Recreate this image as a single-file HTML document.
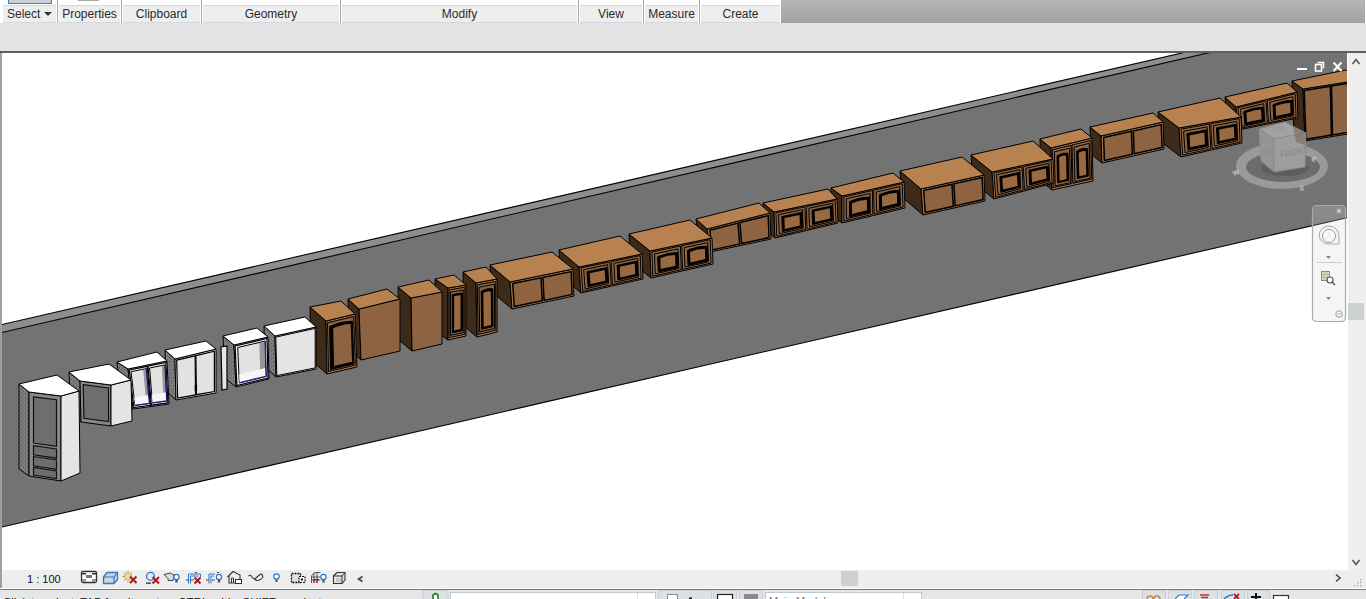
<!DOCTYPE html>
<html><head><meta charset="utf-8"><style>
*{margin:0;padding:0;box-sizing:border-box}
html,body{width:1366px;height:599px;overflow:hidden;background:#fff;font-family:"Liberation Sans",sans-serif}
.a{position:absolute}
.lbl{position:absolute;top:5px;height:18px;background:#eeeeee;border-top:1px solid #d3d9df;border-bottom:1px solid #d3d9df;font-size:12px;color:#2a2a2a;text-align:center;line-height:16px}
.sep{position:absolute;top:0;width:1px;height:23px;background:#a9a9a9}
</style></head><body>
<!-- ribbon -->
<div class="a" style="left:0;top:0;width:781px;height:23px;background:#fff"></div>
<div class="a" style="left:781px;top:0;width:584px;height:23px;background:linear-gradient(#b6b6b6,#a2a2a2)"></div>
<div class="a" style="left:8px;top:0;width:44px;height:4px;background:#c8d0d8;border:1px solid #3c7fd0;border-top:none"></div><div class="a" style="left:78px;top:0;width:21px;height:1px;background:#aaa"></div>
<div class="lbl" style="left:3px;width:53px;text-align:left;padding-left:4px">Select <span style="position:absolute;left:41px;top:6px;width:0;height:0;border-left:4px solid transparent;border-right:4px solid transparent;border-top:4px solid #333"></span></div>
<div class="sep" style="left:57px"></div>
<div class="lbl" style="left:59px;width:61px">Properties</div>
<div class="sep" style="left:121px"></div>
<div class="lbl" style="left:123px;width:77px">Clipboard</div>
<div class="sep" style="left:201px"></div>
<div class="lbl" style="left:203px;width:136px">Geometry</div>
<div class="sep" style="left:340px"></div>
<div class="lbl" style="left:342px;width:235px">Modify</div>
<div class="sep" style="left:578px"></div>
<div class="lbl" style="left:580px;width:62px">View</div>
<div class="sep" style="left:643px"></div>
<div class="lbl" style="left:645px;width:53px">Measure</div>
<div class="sep" style="left:699px"></div>
<div class="lbl" style="left:701px;width:79px">Create</div>
<div class="a" style="left:0;top:23px;width:1366px;height:28px;background:#e4e4e4"></div>
<div class="a" style="left:0;top:51px;width:1366px;height:2px;background:#5f5f5f"></div>
<!-- viewport -->
<svg class="a" style="left:0;top:0" width="1366" height="599" viewBox="0 0 1366 599">
<defs><pattern id="dots" width="4" height="4" patternUnits="userSpaceOnUse"><rect width="4" height="4" fill="#7c7c7c"/><rect x="1" y="1" width="1" height="1" fill="#4a4a4a"/><rect x="3" y="3" width="1" height="1" fill="#5a5a5a"/></pattern><clipPath id="vp"><rect x="2" y="53" width="1345" height="517"/></clipPath></defs>
<g clip-path="url(#vp)">
<polygon points="-50.0,336.5 1400.0,2.8 1400.0,8.4 -50.0,344.6" fill="#8e8e8e"/>
<polygon points="-50.0,344.6 1400.0,8.4 1400.0,205.5 -50.0,539.0" fill="#737373"/>
<line x1="-50" y1="336.5" x2="1400" y2="2.8" stroke="#000" stroke-width="1.1"/>
<line x1="-50" y1="344.6" x2="1400" y2="8.4" stroke="#000" stroke-width="1.1"/>
<line x1="-50" y1="539.0" x2="1400" y2="205.5" stroke="#000" stroke-width="1.1"/>
<polygon points="1292.0,81.0 1303.0,89.0 1305.0,141.0 1294.0,133.0" fill="#3d2a19" stroke="#000" stroke-width="1"/>
<polygon points="1303.0,89.0 1360.0,80.0 1360.0,132.0 1305.0,141.0" fill="#a8754a" stroke="#000" stroke-width="1"/>
<polygon points="1304.2,90.4 1330.4,86.2 1331.4,135.1 1306.0,139.3" fill="#8e6341" stroke="#000" stroke-width="1.5"/>
<polygon points="1331.5,86.1 1358.9,81.7 1358.9,130.6 1332.5,134.9" fill="#8e6341" stroke="#000" stroke-width="1.5"/>
<polygon points="1292.0,81.0 1346.0,70.0 1360.0,80.0 1303.0,89.0" fill="#b7824f" stroke="#000" stroke-width="1"/>
<polygon points="1225.0,97.0 1236.0,107.0 1238.0,130.0 1227.0,120.0" fill="#3d2a19" stroke="#000" stroke-width="1"/>
<polygon points="1236.0,107.0 1297.0,92.0 1298.0,118.0 1238.0,130.0" fill="#a8754a" stroke="#000" stroke-width="1"/>
<polygon points="1237.9,107.7 1266.0,100.9 1267.3,122.9 1239.7,128.5" fill="#8e6341" stroke="#000" stroke-width="1"/>
<polygon points="1240.5,109.2 1263.7,103.7 1264.8,121.7 1242.0,126.4" fill="none" stroke="#000" stroke-width="1"/>
<path d="M1244.9,124.8 L1243.8,111.5 Q1253.4,107.4 1263.3,107.0 L1264.2,120.8 Z" fill="#000" stroke="#000" stroke-width="1"/>
<path d="M1247.1,122.2 L1246.4,112.8 Q1253.6,109.8 1261.0,109.5 L1261.6,119.2 Z" fill="#99693f" stroke="none" stroke-width="1"/>
<polygon points="1267.2,100.6 1295.2,93.7 1296.1,117.1 1268.5,122.7" fill="#8e6341" stroke="#000" stroke-width="1"/>
<polygon points="1269.8,102.2 1292.9,96.7 1293.7,115.7 1270.8,120.4" fill="none" stroke="#000" stroke-width="1"/>
<path d="M1273.8,118.8 L1273.0,104.7 Q1282.6,100.4 1292.4,100.2 L1293.0,114.8 Z" fill="#000" stroke="#000" stroke-width="1"/>
<path d="M1276.1,116.1 L1275.5,106.1 Q1282.7,103.1 1290.1,102.8 L1290.5,113.0 Z" fill="#99693f" stroke="none" stroke-width="1"/>
<polygon points="1225.0,97.0 1287.0,83.0 1297.0,92.0 1236.0,107.0" fill="#b7824f" stroke="#000" stroke-width="1"/>
<polygon points="1158.0,112.0 1179.0,128.0 1181.0,157.0 1160.0,141.0" fill="#3d2a19" stroke="#000" stroke-width="1"/>
<polygon points="1179.0,128.0 1241.0,117.0 1242.0,143.0 1181.0,157.0" fill="#a8754a" stroke="#000" stroke-width="1"/>
<polygon points="1181.0,129.1 1209.5,124.0 1210.8,148.8 1182.7,155.1" fill="#8e6341" stroke="#000" stroke-width="1"/>
<polygon points="1183.6,131.3 1207.1,126.9 1208.3,147.4 1185.0,152.6" fill="none" stroke="#000" stroke-width="1"/>
<polygon points="1186.9,133.6 1206.7,129.8 1207.6,145.9 1188.0,150.2" fill="#000" stroke="#000" stroke-width="1"/>
<polygon points="1189.5,135.4 1204.3,132.5 1205.0,144.2 1190.3,147.3" fill="#99693f" stroke="none" stroke-width="1"/>
<polygon points="1210.7,123.8 1239.2,118.6 1240.1,142.1 1212.0,148.5" fill="#8e6341" stroke="#000" stroke-width="1"/>
<polygon points="1213.3,125.8 1236.8,121.4 1237.6,140.8 1214.4,146.0" fill="none" stroke="#000" stroke-width="1"/>
<polygon points="1216.5,127.9 1236.3,124.2 1236.9,139.4 1217.3,143.7" fill="#000" stroke="#000" stroke-width="1"/>
<polygon points="1219.1,129.6 1233.9,126.8 1234.4,137.8 1219.7,141.0" fill="#99693f" stroke="none" stroke-width="1"/>
<polygon points="1158.0,112.0 1220.0,98.0 1241.0,117.0 1179.0,128.0" fill="#b7824f" stroke="#000" stroke-width="1"/>
<polygon points="1090.0,127.0 1101.0,136.0 1102.0,163.0 1091.0,154.0" fill="#3d2a19" stroke="#000" stroke-width="1"/>
<polygon points="1101.0,136.0 1163.0,122.0 1164.0,149.0 1102.0,163.0" fill="#a8754a" stroke="#000" stroke-width="1"/>
<polygon points="1103.6,137.6 1131.5,131.3 1132.3,154.2 1104.4,160.6" fill="#8e6341" stroke="#000" stroke-width="1.5"/>
<polygon points="1133.3,130.9 1161.2,124.6 1162.1,147.5 1134.2,153.8" fill="#8e6341" stroke="#000" stroke-width="1.5"/>
<polygon points="1090.0,127.0 1153.0,113.0 1163.0,122.0 1101.0,136.0" fill="#b7824f" stroke="#000" stroke-width="1"/>
<polygon points="1040.0,139.0 1051.0,148.0 1052.0,190.0 1041.0,181.0" fill="#3d2a19" stroke="#000" stroke-width="1"/>
<polygon points="1051.0,148.0 1092.0,138.0 1093.0,181.0 1052.0,190.0" fill="#a8754a" stroke="#000" stroke-width="1"/>
<polygon points="1052.3,149.8 1071.1,145.2 1072.0,183.5 1053.2,187.6" fill="#8e6341" stroke="#000" stroke-width="1"/>
<polygon points="1054.4,151.8 1069.6,148.2 1070.4,182.6 1055.2,185.9" fill="none" stroke="#000" stroke-width="1"/>
<path d="M1057.6,182.8 L1057.0,155.9 Q1062.4,152.1 1068.0,153.2 L1068.7,180.4 Z" fill="#000" stroke="#000" stroke-width="1"/>
<path d="M1059.6,180.7 L1059.1,157.5 Q1062.5,154.8 1066.0,155.8 L1066.6,179.1 Z" fill="#99693f" stroke="none" stroke-width="1"/>
<polygon points="1072.0,145.0 1090.8,140.4 1091.7,179.1 1072.9,183.3" fill="#8e6341" stroke="#000" stroke-width="1"/>
<polygon points="1074.1,147.1 1089.2,143.4 1090.1,178.2 1074.9,181.6" fill="none" stroke="#000" stroke-width="1"/>
<path d="M1077.3,178.5 L1076.6,151.2 Q1082.1,147.4 1087.7,148.5 L1088.3,176.0 Z" fill="#000" stroke="#000" stroke-width="1"/>
<path d="M1079.3,176.3 L1078.7,152.8 Q1082.2,150.1 1085.7,151.2 L1086.3,174.7 Z" fill="#99693f" stroke="none" stroke-width="1"/>
<polygon points="1040.0,139.0 1081.0,129.0 1092.0,138.0 1051.0,148.0" fill="#b7824f" stroke="#000" stroke-width="1"/>
<polygon points="971.0,155.0 992.0,172.0 994.0,199.0 973.0,182.0" fill="#3d2a19" stroke="#000" stroke-width="1"/>
<polygon points="992.0,172.0 1053.0,159.0 1054.0,183.0 994.0,199.0" fill="#a8754a" stroke="#000" stroke-width="1"/>
<polygon points="993.9,173.0 1022.0,166.9 1023.3,189.9 995.7,197.2" fill="#8e6341" stroke="#000" stroke-width="1"/>
<polygon points="996.5,174.8 1019.7,169.7 1020.8,188.7 998.0,194.7" fill="none" stroke="#000" stroke-width="1"/>
<polygon points="999.8,176.8 1019.2,172.4 1020.1,187.3 1000.9,192.3" fill="#000" stroke="#000" stroke-width="1"/>
<polygon points="1002.3,178.4 1016.9,175.1 1017.6,185.9 1003.1,189.5" fill="#99693f" stroke="none" stroke-width="1"/>
<polygon points="1023.2,166.6 1051.2,160.6 1052.1,182.3 1024.5,189.6" fill="#8e6341" stroke="#000" stroke-width="1"/>
<polygon points="1025.8,168.4 1048.9,163.3 1049.7,181.2 1026.8,187.2" fill="none" stroke="#000" stroke-width="1"/>
<polygon points="1028.9,170.2 1048.4,165.9 1049.0,179.9 1029.7,184.9" fill="#000" stroke="#000" stroke-width="1"/>
<polygon points="1031.5,171.7 1046.0,168.4 1046.5,178.6 1032.0,182.2" fill="#99693f" stroke="none" stroke-width="1"/>
<polygon points="971.0,155.0 1033.0,141.0 1053.0,159.0 992.0,172.0" fill="#b7824f" stroke="#000" stroke-width="1"/>
<polygon points="900.0,171.0 921.0,189.0 923.0,215.0 902.0,197.0" fill="#3d2a19" stroke="#000" stroke-width="1"/>
<polygon points="921.0,189.0 984.0,175.0 985.0,201.0 923.0,215.0" fill="#a8754a" stroke="#000" stroke-width="1"/>
<polygon points="923.7,190.5 952.0,184.2 953.3,206.3 925.3,212.6" fill="#8e6341" stroke="#000" stroke-width="1.5"/>
<polygon points="953.9,183.8 982.2,177.5 983.1,199.6 955.1,205.9" fill="#8e6341" stroke="#000" stroke-width="1.5"/>
<polygon points="900.0,171.0 962.0,157.0 984.0,175.0 921.0,189.0" fill="#b7824f" stroke="#000" stroke-width="1"/>
<polygon points="831.0,188.0 842.0,196.0 842.0,223.0 831.0,215.0" fill="#3d2a19" stroke="#000" stroke-width="1"/>
<polygon points="842.0,196.0 904.0,182.0 905.0,208.0 842.0,223.0" fill="#a8754a" stroke="#000" stroke-width="1"/>
<polygon points="843.9,196.9 872.4,190.5 872.8,214.3 843.9,221.2" fill="#8e6341" stroke="#000" stroke-width="1"/>
<polygon points="846.3,198.8 870.0,193.4 870.3,213.1 846.4,218.7" fill="none" stroke="#000" stroke-width="1"/>
<path d="M849.5,216.9 L849.5,201.6 Q859.4,197.1 869.4,197.0 L869.6,212.2 Z" fill="#000" stroke="#000" stroke-width="1"/>
<path d="M852.0,213.9 L852.0,203.2 Q859.4,199.9 866.9,199.7 L867.1,210.3 Z" fill="#99693f" stroke="none" stroke-width="1"/>
<polygon points="873.6,190.2 902.2,183.7 903.1,207.1 874.1,214.0" fill="#8e6341" stroke="#000" stroke-width="1"/>
<polygon points="876.2,192.0 899.8,186.6 900.5,205.9 876.6,211.6" fill="none" stroke="#000" stroke-width="1"/>
<path d="M879.7,209.8 L879.4,194.7 Q889.3,190.3 899.3,190.2 L899.8,205.0 Z" fill="#000" stroke="#000" stroke-width="1"/>
<path d="M882.2,206.8 L881.9,196.3 Q889.4,193.1 896.9,192.8 L897.2,203.3 Z" fill="#99693f" stroke="none" stroke-width="1"/>
<polygon points="831.0,188.0 893.0,173.0 904.0,182.0 842.0,196.0" fill="#b7824f" stroke="#000" stroke-width="1"/>
<polygon points="763.0,203.0 774.0,212.0 775.0,238.0 764.0,229.0" fill="#3d2a19" stroke="#000" stroke-width="1"/>
<polygon points="774.0,212.0 837.0,199.0 838.0,223.0 775.0,238.0" fill="#a8754a" stroke="#000" stroke-width="1"/>
<polygon points="775.9,212.9 804.9,206.9 805.8,229.4 776.8,236.3" fill="#8e6341" stroke="#000" stroke-width="1"/>
<polygon points="778.5,214.7 802.5,209.7 803.2,228.2 779.3,233.8" fill="none" stroke="#000" stroke-width="1"/>
<polygon points="781.8,216.6 802.0,212.3 802.5,226.9 782.4,231.6" fill="#000" stroke="#000" stroke-width="1"/>
<polygon points="784.4,218.1 799.5,214.9 799.9,225.4 784.8,228.9" fill="#99693f" stroke="none" stroke-width="1"/>
<polygon points="806.2,206.6 835.2,200.6 836.1,222.2 807.1,229.1" fill="#8e6341" stroke="#000" stroke-width="1"/>
<polygon points="808.8,208.3 832.7,203.3 833.5,221.2 809.5,226.8" fill="none" stroke="#000" stroke-width="1"/>
<polygon points="812.0,210.2 832.2,205.8 832.8,219.9 812.6,224.5" fill="#000" stroke="#000" stroke-width="1"/>
<polygon points="814.6,211.6 829.8,208.3 830.2,218.5 815.1,222.0" fill="#99693f" stroke="none" stroke-width="1"/>
<polygon points="763.0,203.0 828.0,189.0 837.0,199.0 774.0,212.0" fill="#b7824f" stroke="#000" stroke-width="1"/>
<polygon points="696.0,219.0 707.0,229.0 710.0,252.0 699.0,242.0" fill="#3d2a19" stroke="#000" stroke-width="1"/>
<polygon points="707.0,229.0 770.0,213.0 771.0,239.0 710.0,252.0" fill="#a8754a" stroke="#000" stroke-width="1"/>
<polygon points="709.8,230.2 738.0,223.1 739.7,243.9 712.2,249.9" fill="#8e6341" stroke="#000" stroke-width="1.5"/>
<polygon points="739.9,222.6 768.2,215.6 769.1,237.6 741.6,243.5" fill="#8e6341" stroke="#000" stroke-width="1.5"/>
<polygon points="696.0,219.0 759.0,203.0 770.0,213.0 707.0,229.0" fill="#b7824f" stroke="#000" stroke-width="1"/>
<polygon points="629.0,234.0 650.0,251.0 651.0,278.0 630.0,261.0" fill="#3d2a19" stroke="#000" stroke-width="1"/>
<polygon points="650.0,251.0 712.0,238.0 713.0,264.0 651.0,278.0" fill="#a8754a" stroke="#000" stroke-width="1"/>
<polygon points="651.9,252.0 680.4,246.0 681.3,269.8 652.8,276.2" fill="#8e6341" stroke="#000" stroke-width="1"/>
<polygon points="654.5,253.9 678.0,248.9 678.8,268.5 655.2,273.8" fill="none" stroke="#000" stroke-width="1"/>
<path d="M658.3,272.0 L657.7,256.7 Q667.6,252.4 677.5,252.5 L678.1,267.6 Z" fill="#000" stroke="#000" stroke-width="1"/>
<path d="M660.7,269.1 L660.3,258.3 Q667.7,255.2 675.1,255.1 L675.5,265.8 Z" fill="#99693f" stroke="none" stroke-width="1"/>
<polygon points="681.7,245.7 710.2,239.7 711.1,263.1 682.6,269.5" fill="#8e6341" stroke="#000" stroke-width="1"/>
<polygon points="684.2,247.6 707.8,242.6 708.5,261.9 685.0,267.1" fill="none" stroke="#000" stroke-width="1"/>
<path d="M688.0,265.4 L687.5,250.3 Q697.3,246.1 707.3,246.1 L707.9,260.9 Z" fill="#000" stroke="#000" stroke-width="1"/>
<path d="M690.4,262.5 L690.0,251.9 Q697.4,248.8 704.9,248.7 L705.3,259.1 Z" fill="#99693f" stroke="none" stroke-width="1"/>
<polygon points="629.0,234.0 690.0,220.0 712.0,238.0 650.0,251.0" fill="#b7824f" stroke="#000" stroke-width="1"/>
<polygon points="559.0,250.0 579.0,267.0 581.0,293.0 561.0,276.0" fill="#3d2a19" stroke="#000" stroke-width="1"/>
<polygon points="579.0,267.0 642.0,254.0 643.0,279.0 581.0,293.0" fill="#a8754a" stroke="#000" stroke-width="1"/>
<polygon points="581.0,267.9 609.9,261.9 611.3,284.9 582.8,291.3" fill="#8e6341" stroke="#000" stroke-width="1"/>
<polygon points="583.7,269.7 607.6,264.7 608.7,283.6 585.1,288.9" fill="none" stroke="#000" stroke-width="1"/>
<polygon points="587.0,271.7 607.1,267.4 608.0,282.2 588.1,286.7" fill="#000" stroke="#000" stroke-width="1"/>
<polygon points="589.7,273.2 604.7,270.0 605.4,280.7 590.4,284.0" fill="#99693f" stroke="none" stroke-width="1"/>
<polygon points="611.2,261.6 640.2,255.6 641.1,278.2 612.5,284.6" fill="#8e6341" stroke="#000" stroke-width="1"/>
<polygon points="613.9,263.4 637.7,258.4 638.5,277.0 614.9,282.2" fill="none" stroke="#000" stroke-width="1"/>
<polygon points="617.1,265.3 637.2,261.1 637.8,275.6 617.9,280.0" fill="#000" stroke="#000" stroke-width="1"/>
<polygon points="619.8,266.8 634.8,263.6 635.3,274.1 620.3,277.4" fill="#99693f" stroke="none" stroke-width="1"/>
<polygon points="559.0,250.0 620.0,236.0 642.0,254.0 579.0,267.0" fill="#b7824f" stroke="#000" stroke-width="1"/>
<polygon points="490.0,265.0 510.0,282.0 512.0,309.0 492.0,292.0" fill="#3d2a19" stroke="#000" stroke-width="1"/>
<polygon points="510.0,282.0 573.0,269.0 574.0,296.0 512.0,309.0" fill="#a8754a" stroke="#000" stroke-width="1"/>
<polygon points="512.7,283.6 541.0,277.8 542.3,300.7 514.3,306.6" fill="#8e6341" stroke="#000" stroke-width="1.5"/>
<polygon points="542.9,277.4 571.2,271.6 572.1,294.5 544.1,300.4" fill="#8e6341" stroke="#000" stroke-width="1.5"/>
<polygon points="490.0,265.0 552.0,252.0 573.0,269.0 510.0,282.0" fill="#b7824f" stroke="#000" stroke-width="1"/>
<polygon points="463.0,272.0 476.0,283.0 477.0,337.0 464.0,326.0" fill="#3d2a19" stroke="#000" stroke-width="1"/>
<polygon points="476.0,283.0 497.0,279.0 497.0,332.0 477.0,337.0" fill="#a8754a" stroke="#000" stroke-width="1"/>
<polygon points="477.3,284.9 495.7,281.4 495.8,330.2 478.2,334.5" fill="#8e6341" stroke="#000" stroke-width="1"/>
<polygon points="479.0,287.3 494.5,284.3 494.6,328.4 479.7,332.0" fill="none" stroke="#000" stroke-width="1"/>
<path d="M481.7,329.3 L481.2,291.2 Q487.0,287.7 492.8,288.8 L493.0,326.6 Z" fill="#000" stroke="#000" stroke-width="1"/>
<path d="M483.7,326.7 L483.3,292.9 Q487.0,290.5 490.8,291.4 L491.0,325.0 Z" fill="#99693f" stroke="none" stroke-width="1"/>
<polygon points="463.0,272.0 486.0,267.0 497.0,279.0 476.0,283.0" fill="#b7824f" stroke="#000" stroke-width="1"/>
<polygon points="435.0,279.0 448.0,288.0 448.0,340.0 435.0,331.0" fill="#3d2a19" stroke="#000" stroke-width="1"/>
<polygon points="448.0,288.0 466.0,285.0 466.0,336.0 448.0,340.0" fill="#a8754a" stroke="#000" stroke-width="1"/>
<polygon points="449.1,289.9 464.9,287.2 464.9,334.2 449.1,337.7" fill="#8e6341" stroke="#000" stroke-width="1"/>
<polygon points="450.5,292.2 463.8,290.0 463.8,332.4 450.5,335.3" fill="none" stroke="#000" stroke-width="1"/>
<polygon points="452.3,294.5 462.4,292.8 462.4,330.7 452.3,332.8" fill="#000" stroke="#000" stroke-width="1"/>
<polygon points="454.1,296.3 460.6,295.1 460.6,329.0 454.1,330.4" fill="#99693f" stroke="none" stroke-width="1"/>
<polygon points="435.0,279.0 454.0,275.0 466.0,285.0 448.0,288.0" fill="#b7824f" stroke="#000" stroke-width="1"/>
<polygon points="398.0,287.0 411.0,298.0 412.0,351.0 399.0,340.0" fill="#3d2a19" stroke="#000" stroke-width="1"/>
<polygon points="411.0,298.0 442.0,292.0 442.0,344.0 412.0,351.0" fill="#8e6341" stroke="#000" stroke-width="1"/>
<polygon points="398.0,287.0 429.0,280.0 442.0,292.0 411.0,298.0" fill="#b7824f" stroke="#000" stroke-width="1"/>
<polygon points="348.0,299.0 359.0,309.0 361.0,360.0 350.0,350.0" fill="#3d2a19" stroke="#000" stroke-width="1"/>
<polygon points="359.0,309.0 400.0,299.0 400.0,351.0 361.0,360.0" fill="#8e6341" stroke="#000" stroke-width="1"/>
<polygon points="348.0,299.0 387.0,289.0 400.0,299.0 359.0,309.0" fill="#b7824f" stroke="#000" stroke-width="1"/>
<polygon points="310.0,307.0 326.0,321.0 327.0,374.0 311.0,360.0" fill="#3d2a19" stroke="#000" stroke-width="1"/>
<polygon points="326.0,321.0 355.0,314.0 357.0,367.0 327.0,374.0" fill="#a8754a" stroke="#000" stroke-width="1"/>
<polygon points="327.5,322.8 353.6,316.5 355.4,365.2 328.5,371.5" fill="#8e6341" stroke="#000" stroke-width="1"/>
<path d="M330.5,369.5 L329.6,326.5 Q340.9,321.2 352.3,321.1 L353.9,364.0 Z" fill="#000" stroke="#000" stroke-width="1"/>
<path d="M334.1,366.0 L333.2,328.3 Q341.9,324.3 350.7,324.1 L352.0,361.8 Z" fill="#8e6341" stroke="none" stroke-width="1"/>
<polygon points="310.0,307.0 341.0,301.0 355.0,314.0 326.0,321.0" fill="#b7824f" stroke="#000" stroke-width="1"/>
<polygon points="264.0,326.0 275.0,336.0 276.0,377.0 265.0,367.0" fill="url(#dots)" stroke="#000" stroke-width="1"/>
<polygon points="275.0,336.0 316.0,327.0 316.0,369.0 276.0,377.0" fill="#e4e4e4" stroke="#000" stroke-width="1"/>
<polygon points="275.8,337.1 315.2,328.4 315.2,367.9 276.8,375.6" fill="none" stroke="#000" stroke-width="1"/>
<polygon points="264.0,326.0 305.0,317.0 316.0,327.0 275.0,336.0" fill="#ffffff" stroke="#000" stroke-width="1"/>
<polygon points="223.0,336.0 234.0,345.0 236.0,387.0 225.0,378.0" fill="url(#dots)" stroke="#000" stroke-width="1"/>
<polygon points="234.0,345.0 268.0,337.0 269.0,379.0 236.0,387.0" fill="#e4e4e4" stroke="#000" stroke-width="1"/>
<polygon points="235.1,346.0 267.0,338.5 268.0,378.0 236.9,385.5" fill="#f2f2f2" stroke="#000" stroke-width="1.2"/>
<polygon points="237.7,347.5 265.1,341.1 266.1,376.3 239.3,382.8" fill="#e2e2e2" stroke="#000" stroke-width="1"/>
<polygon points="259.4,343.2 264.5,342.0 265.4,375.6 260.4,376.8" fill="#969696" stroke="none" stroke-width="1"/>
<polygon points="239.3,374.3 265.5,368.0 265.7,376.0 239.6,382.3" fill="#f6f6f6" stroke="none" stroke-width="1"/>
<polyline points="239.3,382.8 266.1,376.3 265.1,341.1" fill="none" stroke="#1a2280" stroke-width="1.3"/>
<polygon points="223.0,336.0 257.0,328.0 268.0,337.0 234.0,345.0" fill="#ffffff" stroke="#000" stroke-width="1"/>
<polygon points="221.0,347.0 227.0,346.0 227.0,389.0 222.0,390.0" fill="#e6e6e6" stroke="#000" stroke-width="1.2"/>
<polygon points="165.0,350.0 175.0,359.0 176.0,400.0 166.0,391.0" fill="url(#dots)" stroke="#000" stroke-width="1"/>
<polygon points="175.0,359.0 216.0,349.0 216.0,393.0 176.0,400.0" fill="#e4e4e4" stroke="#000" stroke-width="1"/>
<polygon points="176.7,360.2 195.1,355.8 195.6,394.9 177.6,398.1" fill="#e2e2e2" stroke="#000" stroke-width="1.2"/>
<polygon points="195.9,355.6 214.4,351.2 214.4,391.5 196.4,394.7" fill="#e2e2e2" stroke="#000" stroke-width="1.2"/>
<polygon points="194.7,384.8 197.1,384.4 197.1,390.3 194.7,390.8" fill="#000" stroke="none" stroke-width="1"/>
<polygon points="165.0,350.0 206.0,341.0 216.0,349.0 175.0,359.0" fill="#ffffff" stroke="#000" stroke-width="1"/>
<polygon points="117.0,362.0 128.0,369.0 133.0,409.0 122.0,402.0" fill="url(#dots)" stroke="#000" stroke-width="1"/>
<polygon points="128.0,369.0 167.0,361.0 169.0,404.0 133.0,409.0" fill="#e4e4e4" stroke="#000" stroke-width="1"/>
<polygon points="129.3,370.0 147.2,366.3 150.5,405.3 133.9,407.6" fill="#f2f2f2" stroke="#000" stroke-width="1.2"/>
<polygon points="131.0,371.7 146.3,368.6 149.4,403.4 135.0,405.4" fill="#e2e2e2" stroke="#000" stroke-width="1"/>
<polygon points="143.2,370.1 146.0,369.5 149.0,402.6 146.3,403.0" fill="#969696" stroke="none" stroke-width="1"/>
<polygon points="134.2,397.4 148.5,395.1 149.2,403.0 135.1,405.0" fill="#f6f6f6" stroke="none" stroke-width="1"/>
<polyline points="135.0,405.4 149.4,403.4 146.3,368.6" fill="none" stroke="#1a2280" stroke-width="1.3"/>
<polygon points="148.0,366.2 165.9,362.5 167.9,402.9 151.3,405.2" fill="#f2f2f2" stroke="#000" stroke-width="1.2"/>
<polygon points="149.6,368.0 164.9,364.9 166.8,400.9 152.4,402.9" fill="#e2e2e2" stroke="#000" stroke-width="1"/>
<polygon points="161.8,366.4 164.6,365.8 166.4,400.1 163.7,400.4" fill="#969696" stroke="none" stroke-width="1"/>
<polygon points="151.9,394.6 166.1,392.3 166.6,400.5 152.5,402.5" fill="#f6f6f6" stroke="none" stroke-width="1"/>
<polyline points="152.4,402.9 166.8,400.9 164.9,364.9" fill="none" stroke="#1a2280" stroke-width="1.3"/>
<polygon points="117.0,362.0 157.0,352.0 167.0,361.0 128.0,369.0" fill="#ffffff" stroke="#000" stroke-width="1"/>
<polygon points="69.0,372.0 80.0,381.0 81.0,422.0 71.0,415.0" fill="url(#dots)" stroke="#000"/>
<polygon points="80.0,381.0 111.0,385.0 111.0,426.0 81.0,422.0" fill="#888888" stroke="#000"/>
<polygon points="83.2,384.7 108.5,388.0 108.6,421.6 83.9,418.3" fill="#6e6e6e" stroke="#111" stroke-width="1.2"/>
<polygon points="111.0,385.0 131.0,380.0 132.0,421.0 111.0,426.0" fill="#e4e4e4" stroke="#000"/>
<polygon points="69.0,372.0 109.0,364.0 131.0,380.0 111.0,385.0 80.0,381.0" fill="#fff" stroke="#000"/>
<polygon points="19.0,384.0 29.0,392.0 29.0,476.0 19.0,469.0" fill="url(#dots)" stroke="#000"/>
<polygon points="29.0,392.0 61.0,396.0 61.0,481.0 29.0,476.0" fill="#888888" stroke="#000"/>
<polygon points="33.5,396.8 56.5,399.7 56.5,446.4 33.5,443.0" fill="#6e6e6e" stroke="#111" stroke-width="1.2"/>
<polygon points="33.5,445.6 56.5,448.9 56.5,458.2 33.5,454.8" fill="#6e6e6e" stroke="#111" stroke-width="1.2"/>
<polygon points="33.5,456.5 56.5,459.9 56.5,469.3 33.5,465.8" fill="#6e6e6e" stroke="#111" stroke-width="1.2"/>
<polygon points="33.5,467.4 56.5,471.0 56.5,478.6 33.5,475.0" fill="#6e6e6e" stroke="#111" stroke-width="1.2"/>
<polygon points="61.0,396.0 79.0,391.0 80.0,473.0 61.0,481.0" fill="#e4e4e4" stroke="#000"/>
<polygon points="19.0,384.0 57.0,375.0 79.0,391.0 61.0,396.0 29.0,392.0" fill="#fff" stroke="#000"/>
<g opacity="1">
<ellipse cx="1282" cy="166" rx="46" ry="23" fill="#9a9a9a"/>
<ellipse cx="1283" cy="167" rx="37" ry="15" fill="#6c6c6c"/>
<ellipse cx="1285" cy="168" rx="24" ry="8" fill="#5e5e5e"/>
<polygon points="1259.0,129.0 1285.0,122.0 1306.0,133.0 1274.0,139.0" fill="#a2a2a2" stroke="#8a8a8a" stroke-width="0.8"/>
<polygon points="1259.0,129.0 1274.0,139.0 1274.0,172.0 1261.0,161.0" fill="#959595" stroke="#8a8a8a" stroke-width="0.8"/>
<polygon points="1274.0,139.0 1306.0,133.0 1305.0,167.0 1274.0,172.0" fill="#9d9d9d" stroke="#8a8a8a" stroke-width="0.8"/>
<polygon points="1293.0,126.0 1306.0,133.0 1305.0,145.0 1296.0,142.0" fill="#7d6a58" opacity="0.6"/>
<text x="0" y="0" font-size="8" fill="#888" font-family="Liberation Sans" transform="translate(1281 158) rotate(-11) scale(1 1.15)">FRONT</text>
<text x="0" y="0" font-size="7" fill="#8c8c8c" font-family="Liberation Sans" transform="translate(1262.5 151) rotate(35) scale(0.6 1.2)">LEFT</text>
<text x="0" y="0" font-size="5" fill="#8e8e8e" font-family="Liberation Sans" transform="translate(1274 131) rotate(-8)">TOP</text>
<text x="0" y="0" font-size="7" font-weight="bold" fill="#c4c4c4" font-family="Liberation Sans" transform="translate(1234 176) rotate(-25)">W</text>
<text x="0" y="0" font-size="7" font-weight="bold" fill="#c4c4c4" font-family="Liberation Sans" transform="translate(1299 190) rotate(10)">S</text>
<text x="0" y="0" font-size="7" font-weight="bold" fill="#c4c4c4" font-family="Liberation Sans" transform="translate(1311 160) rotate(30)">E</text>
</g>
<rect x="1297" y="68" width="10" height="2" fill="#fff"/>
<path d="M1317.5 62.5 h6 v6" fill="none" stroke="#fff" stroke-width="1.4"/>
<rect x="1315.5" y="64.5" width="6" height="6.5" fill="none" stroke="#fff" stroke-width="1.6"/>
<path d="M1333.5 62.5 L1341.5 71 M1341.5 62.5 L1333.5 71" stroke="#fff" stroke-width="2"/>
</g>
<!-- nav bar -->
<rect x="1312.5" y="205.5" width="33" height="116" rx="4" fill="rgba(212,212,212,0.24)" stroke="#a9a9a9" stroke-width="1.2"/>
<circle cx="1339" cy="211" r="3.2" fill="#9a9a9a"/>
<path d="M1337.5 209.5 l3 3 M1340.5 209.5 l-3 3" stroke="#eee" stroke-width="0.9"/>
<path d="M1319 236 a10 10 0 1 1 20 0 v8 h-10 a10 10 0 0 1 -10 -8z" fill="#f4f4f4" stroke="#a8a8a8" stroke-width="1"/>
<circle cx="1329" cy="236" r="6.5" fill="#fafafa" stroke="#9a9a9a" stroke-width="1"/><path d="M1325 239 l4 -2.5 l4 2.5 M1329 236.5 v-5" stroke="#dcdcdc" stroke-width="0.8" fill="none"/>
<path d="M1326 256 h5 l-2.5 3z" fill="#8a8a8a"/>
<line x1="1317" y1="262.5" x2="1342" y2="262.5" stroke="#c6ccd2" stroke-width="1"/>
<rect x="1321.5" y="271.5" width="8" height="9" fill="#e6e0c0" stroke="#8a8a8a" stroke-width="1"/><path d="M1324 272 v8 M1327 272 v8 M1322 274.5 h7 M1322 277.5 h7" stroke="#b0a880" stroke-width="0.7"/>
<circle cx="1330" cy="280" r="3" fill="#fff" stroke="#555" stroke-width="1.2"/>
<path d="M1332 282 l3 3" stroke="#555" stroke-width="1.5"/>
<path d="M1326 297 h5 l-2.5 3z" fill="#8a8a8a"/>
<circle cx="1339" cy="314" r="3.2" fill="#fff" stroke="#9a9a9a" stroke-width="1"/>
<path d="M1337.3 314 h3.4" stroke="#9a9a9a" stroke-width="0.9"/>
</svg>
<div class="a" style="left:0;top:53px;width:2px;height:536px;background:#a0a0a0"></div>
<!-- right scrollbar -->
<div class="a" style="left:1347px;top:53px;width:19px;height:518px;background:#efefef;border-left:1px solid #fff"></div>
<svg class="a" style="left:1347px;top:53px" width="19" height="517" viewBox="1347 53 19 517">
<path d="M1352.5 64 L1356 59.5 L1359.5 64" fill="none" stroke="#555" stroke-width="1.6"/>
<rect x="1348" y="303" width="16" height="17" fill="#c8d0d8"/><circle cx="1351" cy="306" r="0.7" fill="#f0d870"/><circle cx="1354" cy="305" r="0.7" fill="#f0d870"/><circle cx="1358" cy="305" r="0.7" fill="#f0d870"/><circle cx="1362" cy="306" r="0.7" fill="#f0d870"/><circle cx="1352" cy="309" r="0.7" fill="#f0d870"/><circle cx="1356" cy="308" r="0.7" fill="#f0d870"/><circle cx="1360" cy="310" r="0.7" fill="#f0d870"/><circle cx="1351" cy="312" r="0.7" fill="#f0d870"/><circle cx="1355" cy="312" r="0.7" fill="#f0d870"/><circle cx="1359" cy="314" r="0.7" fill="#f0d870"/><circle cx="1362" cy="313" r="0.7" fill="#f0d870"/><circle cx="1351" cy="316" r="0.7" fill="#f0d870"/><circle cx="1357" cy="315" r="0.7" fill="#f0d870"/><circle cx="1354" cy="318" r="0.7" fill="#f0d870"/><circle cx="1360" cy="317" r="0.7" fill="#f0d870"/>
<path d="M1352.5 560 L1356 564.5 L1359.5 560" fill="none" stroke="#555" stroke-width="1.6"/>
</svg>
<!-- bottom bar -->
<div class="a" style="left:2px;top:570px;width:1364px;height:18px;background:#eeeeee"></div>
<div class="a" style="left:0;top:588px;width:1366px;height:1px;background:#fff"></div>
<div class="a" style="left:0;top:589px;width:1366px;height:1px;background:#7a7a7a"></div>
<div class="a" style="left:0;top:590px;width:1366px;height:9px;background:#e6e6e6"></div>
<div class="a" style="left:27px;top:573px;font-size:11px;color:#111">1 : 100</div>

<svg class="a" style="left:78px;top:568px" width="292" height="20" viewBox="78 568 292 20">
<!-- 1 detail level -->
<rect x="81.5" y="571.5" width="15" height="11" rx="1.5" fill="#fff" stroke="#333" stroke-width="1.3"/>
<rect x="82" y="573" width="4" height="1.5" fill="#333"/><rect x="92" y="573" width="4" height="1.5" fill="#333"/>
<rect x="86" y="575" width="6" height="3" fill="#777"/><rect x="82" y="579" width="4" height="3" fill="#999"/><rect x="92" y="579" width="4" height="3" fill="#999"/>
<!-- 2 cube -->
<path d="M103.5 577 L107 572.5 L117.5 572.5 L117.5 579.5 L114 583.5 L103.5 583.5 Z" fill="#ced4da" stroke="#2a78d0" stroke-width="1.3"/>
<path d="M103.5 577 L114 577 L117.5 572.5 M114 577 L114 583.5" fill="none" stroke="#2a78d0" stroke-width="1.2"/>
<!-- 3 sun x -->
<circle cx="128" cy="576.5" r="3.6" fill="#f0e0a0" stroke="#d9a060" stroke-width="1"/>
<path d="M128 570.5v2 M122.5 576.5h2 M124 572.5l1.2 1.2 M124 580.5l1.2 -1.2 M128 582.5v-1.5 M132 572.5l-1.2 1.2" stroke="#d08a50" stroke-width="1"/>
<path d="M130 576.5 L136.5 583 M136.5 576.5 L130 583" stroke="#b01818" stroke-width="2"/>
<!-- 4 shadow x -->
<circle cx="150.5" cy="576.3" r="4" fill="#e8e8ec" stroke="#2a78d0" stroke-width="1.2"/>
<rect x="146" y="582.5" width="5" height="1.3" fill="#333"/>
<path d="M152.5 577 L159 583.5 M159 577 L152.5 583.5" stroke="#b01818" stroke-width="2"/>
<!-- 5 teapot bulb -->
<path d="M164 574.5 L168 578.5 L168 580.5 L173 580.5 L174 575 L170 573 Z" fill="#dcdcdc" stroke="#444" stroke-width="1"/>
<circle cx="176.5" cy="577" r="2.6" fill="#fff" stroke="#2a78d0" stroke-width="1.2"/>
<rect x="175.3" y="579.5" width="2.4" height="3" fill="#555"/>
<!-- 6 crop x -->
<path d="M188.5 583.5 L188.5 574 L200.5 574 L200.5 577.5 M190.5 583.5 L190.5 576 L198.5 576" fill="none" stroke="#2a78d0" stroke-width="1"/>
<path d="M186 580 h3 M191 580 h3 M195 572.5h2" stroke="#444" stroke-width="1"/>
<path d="M194.5 577.5 L200.5 583.5 M200.5 577.5 L194.5 583.5" stroke="#b01818" stroke-width="2"/>
<!-- 7 crop bulb -->
<path d="M209 583.5 L209 574 L215 574 M211 583.5 L211 576 L214 576" fill="none" stroke="#2a78d0" stroke-width="1"/>
<path d="M206 580 h3 M212 580 h3 M217 572.5h2" stroke="#444" stroke-width="1"/>
<circle cx="219" cy="577" r="2.6" fill="#fff" stroke="#2a78d0" stroke-width="1.2"/>
<rect x="217.8" y="579.5" width="2.4" height="3" fill="#555"/>
<!-- 8 house lock -->
<path d="M227.5 577 L233 571.5 L240 575 L240 579 M229 576 L229 583 L235 583" fill="none" stroke="#333" stroke-width="1.1"/>
<path d="M231.5 583 v-5 h2 v5" fill="none" stroke="#333" stroke-width="1"/>
<rect x="235.5" y="579.5" width="6" height="4" fill="#fff" stroke="#333" stroke-width="1"/>
<!-- 9 glasses -->
<path d="M248.5 576 q2 -2 3.5 1 q1.5 3 4 1 q3 -3 5 -4 q2.5 1 1.5 3.5 q-2 3 -4.5 3 q-3 0 -3.5 -2" fill="none" stroke="#333" stroke-width="1.1"/>
<!-- 10 bulb -->
<circle cx="276.5" cy="576.5" r="2.7" fill="#fff" stroke="#2a78d0" stroke-width="1.2"/>
<rect x="275.3" y="579" width="2.4" height="3" fill="#666"/>
<!-- 11 camera frame -->
<rect x="291.5" y="573.5" width="9" height="9" fill="#dde0e4" stroke="#111" stroke-width="1.3" stroke-dasharray="2 1"/>
<rect x="299" y="576.5" width="6" height="6" fill="#fff" stroke="#111" stroke-width="1.2" stroke-dasharray="2 1"/>
<rect x="301" y="578.5" width="2" height="2" fill="#111"/>
<!-- 12 grid bulb -->
<path d="M311.5 583 v-7 l3 -3.5 h6 M314 583 v-10 M317 583 v-10 M311.5 577 h9 M311.5 580 h9" fill="none" stroke="#444" stroke-width="0.9"/>
<path d="M313 579.5 h6 M314 579.5 v3.5 M317 579.5 v3.5" stroke="#c01010" stroke-width="1"/>
<circle cx="323.5" cy="577" r="2.6" fill="#fff" stroke="#2a78d0" stroke-width="1.2"/>
<rect x="322.3" y="579.5" width="2.4" height="3" fill="#555"/>
<!-- 13 box -->
<path d="M333.5 576 L337 572.5 L345 572.5 L345 580 L342 583.5 L333.5 583.5 Z" fill="#e6e6e6" stroke="#333" stroke-width="1.1"/>
<path d="M333.5 576 L342 576 L345 572.5 M342 576 V583.5" fill="none" stroke="#333" stroke-width="1"/>
<rect x="336" y="578" width="5" height="4" fill="#c8c8c8"/>
<!-- < -->
<path d="M362.5 576.5 L358.5 579 L362.5 581.5" fill="none" stroke="#444" stroke-width="1.6"/>
</svg>

<svg class="a" style="left:841px;top:571px" width="17" height="15" viewBox="841 571 17 15"><rect x="841" y="571" width="17" height="15" fill="#c8d0d8"/><circle cx="844" cy="574" r="0.7" fill="#f0d870"/><circle cx="847" cy="573" r="0.7" fill="#f0d870"/><circle cx="851" cy="573" r="0.7" fill="#f0d870"/><circle cx="855" cy="574" r="0.7" fill="#f0d870"/><circle cx="845" cy="577" r="0.7" fill="#f0d870"/><circle cx="849" cy="576" r="0.7" fill="#f0d870"/><circle cx="853" cy="578" r="0.7" fill="#f0d870"/><circle cx="844" cy="580" r="0.7" fill="#f0d870"/><circle cx="848" cy="580" r="0.7" fill="#f0d870"/><circle cx="852" cy="582" r="0.7" fill="#f0d870"/><circle cx="855" cy="581" r="0.7" fill="#f0d870"/><circle cx="846" cy="584" r="0.7" fill="#f0d870"/><circle cx="850" cy="583" r="0.7" fill="#f0d870"/><circle cx="854" cy="584" r="0.7" fill="#f0d870"/></svg>
<svg class="a" style="left:1330px;top:570px" width="36" height="18" viewBox="1330 570 36 18">
<path d="M1336 574.5 L1340 578 L1336 581.5" fill="none" stroke="#444" stroke-width="1.6"/><rect x="1360" y="579" width="1.3" height="1.3" fill="#9aa4ae"/><rect x="1357" y="582" width="1.3" height="1.3" fill="#9aa4ae"/><rect x="1360" y="582" width="1.3" height="1.3" fill="#9aa4ae"/><rect x="1354" y="585" width="1.3" height="1.3" fill="#9aa4ae"/><rect x="1357" y="585" width="1.3" height="1.3" fill="#9aa4ae"/><rect x="1360" y="585" width="1.3" height="1.3" fill="#9aa4ae"/>
</svg>
<svg class="a" style="left:0;top:589px" width="1366" height="10" viewBox="0 589 1366 10">
<rect x="423" y="590.5" width="25" height="9" fill="#dde1e6" stroke="#c8d0d8" stroke-width="1"/>
<path d="M433 599 v-4 l2.5 -1.5 l2.5 1.5 v4" fill="#fff" stroke="#1a7a1a" stroke-width="1.6"/>
<rect x="450.5" y="592.5" width="205" height="8" fill="#fff" stroke="#c0c8d0" stroke-width="1"/>
<line x1="637.5" y1="593" x2="637.5" y2="599" stroke="#e0e0e0"/>
<rect x="658.5" y="590.5" width="53" height="9" fill="#dde1e6" stroke="#c8d0d8" stroke-width="1"/>
<rect x="667.5" y="594.5" width="10" height="6" fill="#fff" stroke="#888" stroke-width="1"/>
<circle cx="690.5" cy="598.5" r="1.5" fill="#222"/>
<rect x="713.5" y="590.5" width="23" height="9" fill="#dde1e6" stroke="#c8d0d8" stroke-width="1"/>
<rect x="717.5" y="594.5" width="15" height="6" fill="#fff" stroke="#222" stroke-width="1.2"/>
<rect x="739.5" y="590.5" width="23" height="9" fill="#dde1e6" stroke="#c8d0d8" stroke-width="1"/>
<rect x="744" y="594" width="14" height="6" fill="#8a8a8a"/>
<rect x="765.5" y="592.5" width="156" height="8" fill="#fff" stroke="#c0c8d0" stroke-width="1"/>
<line x1="903.5" y1="593" x2="903.5" y2="599" stroke="#e0e0e0"/>
<text x="769" y="605" font-size="11" fill="#8a7060" font-family="Liberation Sans">Main Model</text>
<rect x="1142.5" y="590.5" width="23" height="9" fill="#dde1e6" stroke="#c8d0d8" stroke-width="1"/>
<path d="M1147 599 a3 3 0 0 1 6 0 M1154 599 a3 3 0 0 1 6 0" fill="none" stroke="#c88a3a" stroke-width="1.6"/>
<rect x="1168.5" y="590.5" width="23" height="9" fill="#dde1e6" stroke="#c8d0d8" stroke-width="1"/>
<path d="M1175 599 l4 -4 h9 l-4 4" fill="#fff" stroke="#2a78d0" stroke-width="1.2"/>
<rect x="1194.5" y="590.5" width="23" height="9" fill="#dde1e6" stroke="#c8d0d8" stroke-width="1"/>
<path d="M1200 595 h9 M1201 597.5 h7" stroke="#c03020" stroke-width="1.6"/>
<rect x="1221.5" y="590.5" width="23" height="9" fill="#dde1e6" stroke="#c8d0d8" stroke-width="1"/>
<path d="M1224 599 q4 -4 9 -4" fill="none" stroke="#2a78d0" stroke-width="1.3"/>
<path d="M1234 594 l5 5 M1239 594 l-5 5" stroke="#c01818" stroke-width="1.8"/>
<rect x="1247.5" y="590.5" width="22" height="9" fill="#dde1e6" stroke="#c8d0d8" stroke-width="1"/>
<path d="M1256 593 v6 M1251 597 h10" stroke="#111" stroke-width="2"/>
<rect x="1273.5" y="595.5" width="15" height="5" fill="#fff" stroke="#333" stroke-width="1.2"/>
</svg>
<div class="a" style="left:3px;top:596px;font-size:11.5px;color:#111;white-space:nowrap">Click to select, TAB for alternates, CTRL adds, SHIFT unselects.</div>
</body></html>
